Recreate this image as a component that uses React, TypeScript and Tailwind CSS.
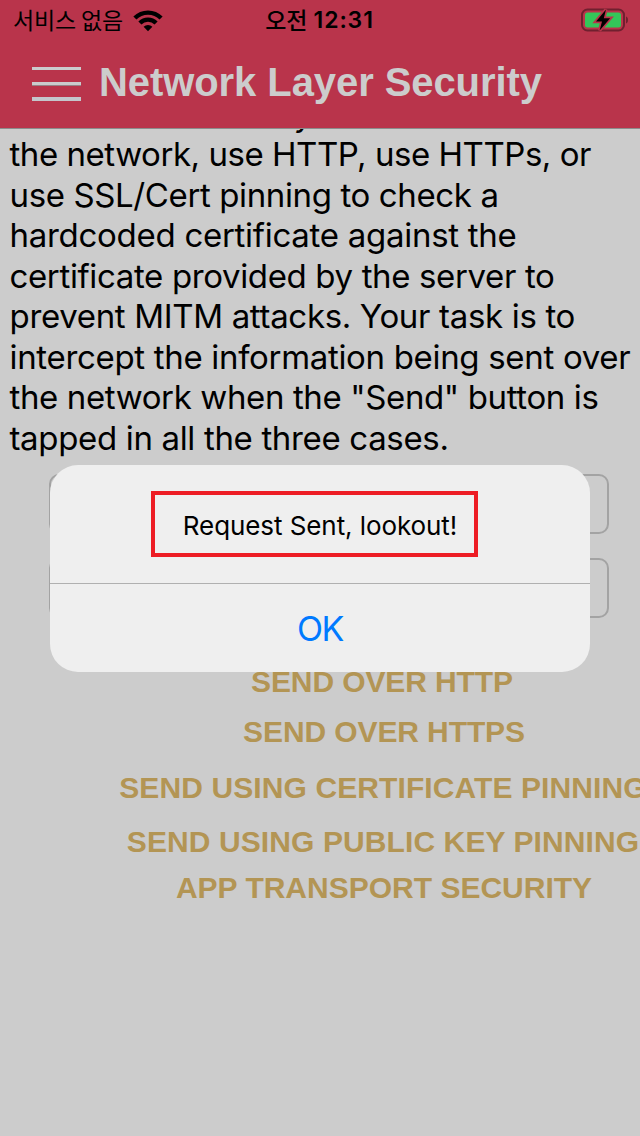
interface Line {
  text: string;
  className: string;
}

const LINES: Line[] = [
  { text: 'to send user key over', className: 'tracking-[-0.25px] pl-[49px]' },
  { text: 'the network, use HTTP, use HTTPs, or', className: 'tracking-[-0.46px]' },
  { text: 'use SSL/Cert pinning to check a', className: 'tracking-[-0.38px]' },
  { text: 'hardcoded certificate against the', className: 'tracking-[-0.28px]' },
  { text: 'certificate provided by the server to', className: 'tracking-[-0.36px]' },
  { text: 'prevent MITM attacks. Your task is to', className: 'tracking-[-0.33px]' },
  { text: 'intercept the information being sent over', className: 'tracking-[-0.32px]' },
  { text: 'the network when the "Send" button is', className: 'tracking-[-0.38px]' },
  { text: 'tapped in all the three cases.', className: 'tracking-[-0.34px]' },
];

const ACTIONS = [
  { label: 'SEND OVER HTTP', className: 'h-[50px] -ml-1 tracking-[-0.1px]' },
  { label: 'SEND OVER HTTPS', className: 'h-[50px] tracking-[-0.1px]' },
  { label: 'SEND USING CERTIFICATE PINNING', className: 'h-[62px] tracking-[0.1px] -ml-0.5' },
  { label: 'SEND USING PUBLIC KEY PINNING', className: 'h-[46px] tracking-[0.1px] -ml-0.5' },
  { label: 'APP TRANSPORT SECURITY', className: 'h-[46px]' },
];

function WifiIcon() {
  return (
    <svg width="30" height="23" viewBox="0 0 30 23" fill="none" stroke="#000" strokeWidth="4.3">
      <path d="M1.9 9.1a18.4 18.4 0 0 1 26.2 0" />
      <path d="M6.9 14.1a11.4 11.4 0 0 1 16.2 0" />
      <path d="M15 22.3l-4.4-4.6a6.3 6.3 0 0 1 8.8 0z" fill="#000" stroke="none" />
    </svg>
  );
}

function BatteryIcon() {
  return (
    <svg width="50" height="26" viewBox="0 0 50 26" fill="none">
      <rect x="3" y="2.5" width="42" height="21" rx="5.5" stroke="#70202f" strokeWidth="2" />
      <path d="M47 9.5c1.4.6 2 1.8 2 3.5s-.6 2.9-2 3.5z" fill="#70202f" />
      <rect x="6" y="5.5" width="36" height="15" rx="2.5" fill="#34c759" />
      <path
        d="M27 2.6L17 14.6h6l-2.4 8.8L31.2 11.2h-6.4z"
        fill="#000"
        stroke="#b9344b"
        strokeWidth="3.4"
        paintOrder="stroke"
      />
    </svg>
  );
}

function StatusBar() {
  return (
    <div className="grid h-10 grid-cols-3 items-center pl-[13px] pr-[11px] text-black">
      <div className="flex items-center gap-[10px]">
        <span className="-mt-0.5 whitespace-nowrap font-['Noto_Sans_CJK_KR',sans-serif] text-[23px] leading-[38px] tracking-[-0.15px]">
          서비스 없음
        </span>
        <WifiIcon />
      </div>
      <div className="-ml-[3px] flex items-center justify-center gap-[6px]">
        <span className="-mt-0.5 font-['Noto_Sans_CJK_KR',sans-serif] text-[23px] font-medium leading-[38px]">오전</span>
        <span className="font-['Inter',sans-serif] text-[23px] font-semibold leading-10 tracking-[0.9px]">12:31</span>
      </div>
      <div className="flex justify-end">
        <BatteryIcon />
      </div>
    </div>
  );
}

function Header() {
  return (
    <header className="h-[129px] shrink-0 border-b border-[#8c8c8c] bg-[#b9344b]">
      <StatusBar />
      <div className="flex h-[88px] items-center pl-8">
        <button className="flex w-[49px] flex-col" aria-label="menu">
          <span className="h-[3px] bg-[#cbcbcd]" />
          <span className="mt-3 box-content h-[3px] border-b border-[#958388] bg-[#cbcbcd]" />
          <span className="mt-[11px] h-1 bg-[#c4c6cc]" />
        </button>
        <h1 className="-mt-[5px] ml-[18px] whitespace-nowrap font-['Liberation_Sans',sans-serif] text-[40px] font-bold leading-[60px] tracking-[-0.08px] text-[#cccccc]">
          Network Layer Security
        </h1>
      </div>
    </header>
  );
}

function Dialog() {
  return (
    <div className="absolute inset-0 flex items-center justify-center pt-px">
      <div className="w-[540px] overflow-hidden rounded-[28px] bg-[#efefef] font-['Inter',sans-serif]">
        <div className="flex h-[119px] items-center justify-center border-b border-[#b0b0b0]">
          <div className="relative flex h-[66px] items-center text-[26px] text-black">
            <p className="whitespace-nowrap pt-0.5 tracking-[-0.08px]">Request Sent, lookout!</p>
            <div className="absolute top-0 -left-8 h-full w-[327px] border-4 border-[#ed1c24]" />
          </div>
        </div>
        <button className="flex h-[88px] w-full items-center justify-center text-[34px] tracking-[-1.4px] text-[#007aff]">
          OK
        </button>
      </div>
    </div>
  );
}

export default function App() {
  return (
    <div className="relative flex h-[1136px] w-[640px] flex-col overflow-hidden bg-[#cccccc]">
      <Header />

      <main className="flex flex-1 flex-col overflow-hidden">
        {/* Description, scrolled up by most of a line */}
        <div className="-mt-[35.5px] pl-[9.5px] font-['Inter',sans-serif] text-[33px] leading-[40.55px] text-black">
          {LINES.map((line) => (
            <p key={line.text} className={`whitespace-nowrap ${line.className}`}>{line.text}</p>
          ))}
        </div>

        <div className="ml-[49px] mt-[15.5px] flex w-[560px] flex-col gap-6">
          <div className="h-[60px] rounded-[10px] border-2 border-[#a3a3a3]" />
          <div className="h-[60px] rounded-[10px] border-2 border-[#a3a3a3]" />
        </div>

        <div className="mt-[39px] flex w-[768px] flex-col font-['Liberation_Sans',sans-serif] text-[30px] font-bold text-[#b39554]">
          {ACTIONS.map((action) => (
            <button
              key={action.label}
              className={`flex shrink-0 items-center justify-center whitespace-nowrap ${action.className}`}
            >
              {action.label}
            </button>
          ))}
        </div>
      </main>

      <Dialog />
    </div>
  );
}
